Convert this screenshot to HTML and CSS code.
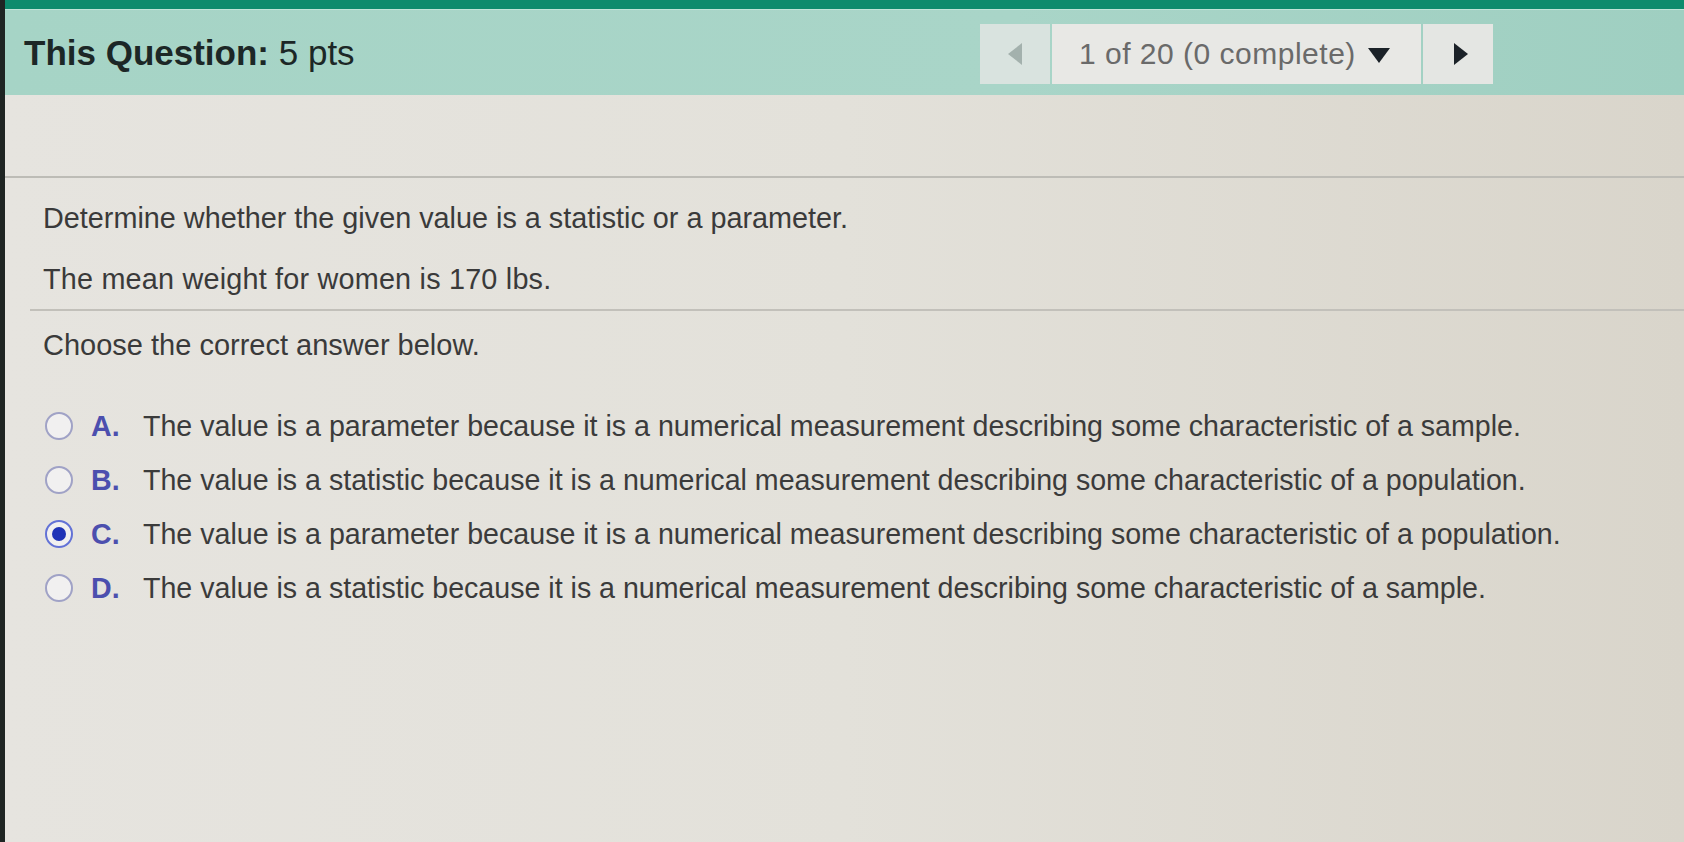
FILE: index.html
```html
<!DOCTYPE html>
<html>
<head>
<meta charset="utf-8">
<link rel="stylesheet" href="styles.css">
</head>
<body>
<div class="page">
  <div class="topbar"></div>
  <div class="header">
    <div class="title"><b>This Question:</b> 5 pts</div>
    <div class="nav">
      <div class="nav-btn prev"><span class="tri-left"></span></div>
      <div class="nav-mid">1 of 20 (0 complete) <span class="tri-down"></span></div>
      <div class="nav-btn next"><span class="tri-right"></span></div>
    </div>
  </div>
  <div class="spacer"></div>
  <div class="rule-full"></div>
  <div class="question">
    <p class="q1">Determine whether the given value is a statistic or a parameter.</p>
    <p class="q2">The mean weight for women is 170 lbs.</p>
  </div>
  <div class="rule-inner"></div>
  <div class="answers">
    <p class="choose">Choose the correct answer below.</p>
    <div class="options">
      <div class="option"><span class="radio"></span><span class="letter">A.</span><span class="text">The value is a parameter because it is a numerical measurement describing some characteristic of a sample.</span></div>
      <div class="option"><span class="radio"></span><span class="letter">B.</span><span class="text">The value is a statistic because it is a numerical measurement describing some characteristic of a population.</span></div>
      <div class="option"><span class="radio checked"></span><span class="letter">C.</span><span class="text">The value is a parameter because it is a numerical measurement describing some characteristic of a population.</span></div>
      <div class="option"><span class="radio"></span><span class="letter">D.</span><span class="text">The value is a statistic because it is a numerical measurement describing some characteristic of a sample.</span></div>
    </div>
  </div>
</div>
</body>
</html>
```
FILE: styles.css
```css
html, body {
  margin: 0;
  padding: 0;
}
body {
  font-family: "Liberation Sans", Arial, sans-serif;
  color: #3a3a3a;
  background: #e4e2dc;
}
.page {
  min-height: 842px;
  border-left: 5px solid #1f2523;
  background: linear-gradient(90deg, #e6e4df 0%, #e3e1da 50%, #d9d5cb 100%);
  overflow: hidden;
}
.topbar {
  height: 9px;
  background: #0d8b6d;
}
.header {
  height: 86px;
  background: linear-gradient(90deg, #a6d4c6 0%, #a9d5c8 60%, #9fcfc1 100%);
  display: flex;
  align-items: center;
  justify-content: space-between;
  padding: 0 191px 0 19px;
  border-top: 1px solid #bfe3d8;
  box-sizing: border-box;
}
.title {
  font-size: 35px;
  color: #1c2726;
  margin-top: 1px;
}
.title b {
  font-weight: bold;
}
.nav {
  display: flex;
  height: 60px;
  gap: 2px;
  margin-top: 2px;
}
.nav-btn {
  width: 70px;
  display: flex;
  align-items: center;
  justify-content: center;
  background: #e4e6e3;
}
.nav-btn.prev {
  background: #d9e3df;
}
.nav-mid {
  width: 369px;
  box-sizing: border-box;
  padding-left: 27px;
  display: flex;
  align-items: center;
  background: #e8e8e5;
  font-size: 30px;
  color: #6a6a6a;
  white-space: nowrap;
  letter-spacing: 0.5px;
}
.tri-left {
  width: 0;
  height: 0;
  border-top: 11px solid transparent;
  border-bottom: 11px solid transparent;
  border-right: 14px solid #a3b1ad;
}
.tri-right {
  width: 0;
  height: 0;
  border-top: 11px solid transparent;
  border-bottom: 11px solid transparent;
  border-left: 14px solid #1b2228;
  margin-left: 6px;
}
.tri-down {
  display: inline-block;
  width: 0;
  height: 0;
  border-left: 11px solid transparent;
  border-right: 11px solid transparent;
  border-top: 15px solid #1b2228;
  margin-left: 12px;
  margin-top: 4px;
}
.spacer {
  height: 81px;
}
.rule-full {
  height: 2px;
  background: #bdbcb6;
}
.question {
  padding-left: 38px;
  font-size: 28.8px;
}
.question p, .answers p {
  margin: 0;
  line-height: 36px;
}
.q1 {
  padding-top: 22px;
}
.q2 {
  padding-top: 25px;
  padding-bottom: 12px;
  letter-spacing: 0.2px;
}
.rule-inner {
  height: 2px;
  background: #c2c0ba;
  margin-left: 25px;
}
.answers {
  padding-left: 38px;
  font-size: 28.6px;
}
.choose {
  padding-top: 16px;
  padding-bottom: 36px;
  font-size: 29px;
}
.options {
  display: flex;
  flex-direction: column;
}
.option {
  height: 54px;
  display: flex;
  align-items: center;
  white-space: nowrap;
}
.radio {
  width: 28px;
  height: 28px;
  box-sizing: border-box;
  border: 2.5px solid #a0a2c6;
  border-radius: 50%;
  margin-left: 2px;
  flex: none;
  display: flex;
  align-items: center;
  justify-content: center;
  background: #f1f0f0;
}
.radio.checked {
  border: 2.5px solid #6372d6;
}
.radio.checked::after {
  content: "";
  width: 14px;
  height: 14px;
  border-radius: 50%;
  background: #1f33b7;
}
.letter {
  width: 52px;
  margin-left: 18px;
  font-weight: bold;
  color: #4c4fae;
  flex: none;
}
.text {
  color: #3b3b3b;
}
```
